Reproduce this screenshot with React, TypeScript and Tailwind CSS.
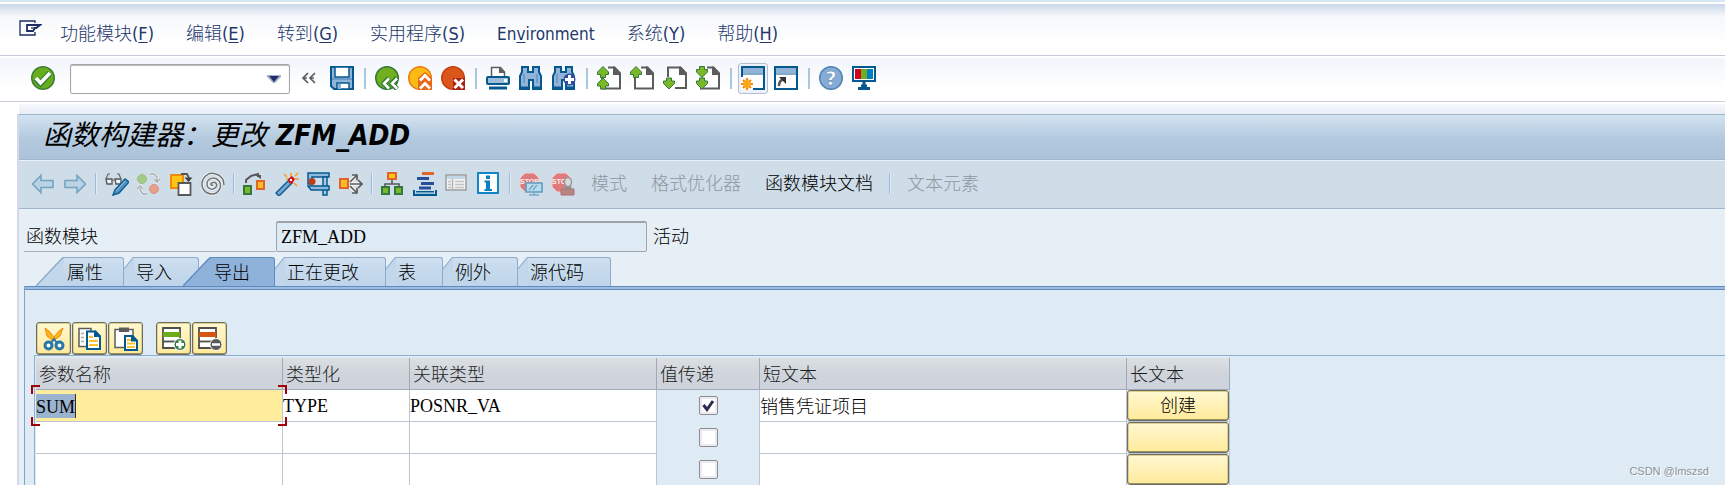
import type { ReactNode } from "react";

const MENU = [
  { label: "功能模块", hotkey: "F" },
  { label: "编辑", hotkey: "E" },
  { label: "转到", hotkey: "G" },
  { label: "实用程序", hotkey: "S" },
  { label: "Environment", hotkey: "" },
  { label: "系统", hotkey: "Y" },
  { label: "帮助", hotkey: "H" },
];

const TABS = ["属性", "导入", "导出", "正在更改", "表", "例外", "源代码"];

const COLUMNS = [
  { title: "参数名称", width: "w-[247px]" },
  { title: "类型化", width: "w-[127px]" },
  { title: "关联类型", width: "w-[247px]" },
  { title: "值传递", width: "w-[103px]" },
  { title: "短文本", width: "w-[367px]" },
  { title: "长文本", width: "w-[103px]" },
];

const ROWS = [
  { name: "SUM", typing: "TYPE", ref: "POSNR_VA", byValue: true, text: "销售凭证项目", action: "创建" },
  { name: "", typing: "", ref: "", byValue: false, text: "", action: "" },
  { name: "", typing: "", ref: "", byValue: false, text: "", action: "" },
];

const CJK = "font-['Liberation_Sans','Noto_Sans_CJK_SC',sans-serif] font-light";
const DATA = "font-['Liberation_Serif','Noto_Sans_CJK_SC',serif]";
const YELLOW =
  "rounded-[3px] border border-[#6c6b66] bg-linear-to-b from-[#fff8d2] to-[#ffea99] shadow-[inset_0_-1px_0_#9a9160,inset_0_0_0_1px_#ddd08a]";

function Icon({ children, className = "" }: { children: ReactNode; className?: string }) {
  return (
    <svg viewBox="0 0 24 24" className={`block size-6 flex-none ${className}`} fill="none" aria-hidden="true">
      {children}
    </svg>
  );
}

function Tool({ label, children, disabled }: { label: string; children: ReactNode; disabled?: boolean }) {
  return (
    <button type="button" aria-label={label} disabled={disabled} className="flex-none">
      <Icon>{children}</Icon>
    </button>
  );
}

function Sep() {
  return <span className="h-[21px] w-[3px] flex-none border-r-2 border-[#a9c8e0]" />;
}

function ThinSep() {
  return <span className="h-[21px] w-0.5 flex-none border-r border-[#e1ebf7] bg-[#9dbbe0]" />;
}

/* ---- standard toolbar drawings ---- */

const UP = "M6 0.500l5.500 5.500v2.500H8.500v3h-5v-3H0.500V6z";
const DOWN = "M6 11.500l5.500-5.500V3.500H8.500v-3h-5v3H0.500V6z";

function PageIcon({ top, bottom }: { top?: string; bottom?: string }) {
  return (
    <>
      <path d="M9 1h9l5.500 6v15.500H5.500V15" fill="#fff" />
      <path d={bottom && !top ? "M5 11V1.500h12l6 6v14.500H12" : "M11 1.500h6l6 6V22.500H5V12"} stroke="#5c5c5c" strokeWidth="2" />
      <path d="M16 0.500h2L24 7v2h-8z" fill="#5c5c5c" />
      {top && <path d={top} fill="#7ab827" stroke="#33793d" />}
      {bottom && (
        <g transform="translate(0 11.500)">
          <path d={bottom} fill="#7ab827" stroke="#33793d" />
        </g>
      )}
    </>
  );
}

function Binoculars() {
  return (
    <>
      <path d="M3 1h6v5h5V1h6v5l2 4v13h-8V14h-4v9H1V10l2-4z" fill="#93b4d8" stroke="#04598f" strokeWidth="2" />
      <path d="M5 8v9M18 8v9" stroke="#6d9ec9" strokeWidth="2" />
      <path d="M1 22h8M14 22h8" stroke="#04598f" strokeWidth="3" />
    </>
  );
}

function StopSign() {
  return (
    <>
      <path d="M6 1h9l5 5v9l-5 5H6l-5-5V6z" fill="#df7b7d" stroke="#f0d0d2" />
      <text x="10.500" y="12" textAnchor="middle" className="fill-[#fbeeee] font-['Liberation_Sans',sans-serif] text-[7px] font-bold">
        STOP
      </text>
    </>
  );
}

function MenuBar() {
  return (
    <nav className="flex h-[52px] items-center border-b border-[#c6cad6] bg-linear-to-b from-[#cad7e7] via-[#f6f8fb] via-25% to-white to-75% pt-[9px] pl-[19px]">
      <button type="button" aria-label="菜单" className="mb-3 w-[41px]">
        <svg width="23" height="17" viewBox="0 0 23 17" fill="none" aria-hidden="true">
          <path d="M16 3V1H1v14h15v-3" stroke="#1c2f63" strokeWidth="1.300" />
          <path d="M8 5h13l-4 3h-1l-2 3H8z" fill="#fff" stroke="#1c2f63" strokeWidth="1.800" />
          <path d="M12 8h6" stroke="#1c2f63" strokeWidth="1.300" />
        </svg>
      </button>
      <div className="flex items-center gap-8 text-[#24376c]">
        {MENU.map((m) => (
          <button
            key={m.label}
            type="button"
            className="font-['DejaVu_Sans_Condensed','DejaVu_Sans','Noto_Sans_CJK_SC',sans-serif] text-lg leading-6 whitespace-nowrap"
          >
            {m.hotkey ? (
              <>
                <span className={CJK}>{m.label}</span>(<u className="underline-offset-2">{m.hotkey}</u>)
              </>
            ) : (
              <span className="text-[17px]">
                En<u className="underline-offset-2">v</u>ironment
              </span>
            )}
          </button>
        ))}
      </div>
    </nav>
  );
}

function StandardToolbar() {
  return (
    <div className="mt-0.5 flex h-11 items-center border-b border-[#cbd0dc] bg-linear-to-b from-[#f2f5fb] to-white to-70% pr-4 pb-[3px] pl-[31px]">
      <Tool label="确认">
        <circle cx="12" cy="12" r="11.250" fill="#68ad1e" stroke="#3f7f37" strokeWidth="1.500" />
        <path d="M4.500 12.500l5 5L19 7" stroke="#3f7f37" strokeWidth="6" />
        <path d="M5 12l4.500 5L19 7" stroke="#fff" strokeWidth="3.500" />
      </Tool>
      <div className="mt-0.5 ml-[15px] flex h-[30px] w-[220px] flex-none items-center rounded-xs border border-[#a2a4a8] bg-white shadow-[inset_0_1px_1px_#b9bbbf]">
        <input aria-label="命令" className="h-full min-w-0 flex-1 bg-transparent px-2 outline-none" />
        <button type="button" aria-label="命令历史" className="mr-2">
          <svg width="14" height="8" viewBox="0 0 14 8" aria-hidden="true">
            <path d="M0 0h14v2l-6 6H6L0 2z" fill="#a8afcb" />
            <path d="M2 1h10L7 7z" fill="#1f2f6b" />
          </svg>
        </button>
      </div>
      <button type="button" aria-label="隐藏命令字段" className="mr-3 ml-[11px]">
        <svg width="17" height="12" viewBox="0 0 17 12" fill="none" aria-hidden="true">
          <path d="M7 1L2 6l5 5M14 1L9 6l5 5M3 6h3M10 6h3" stroke="#5d5d5d" strokeWidth="1.700" />
        </svg>
      </button>
      <div className="flex items-center gap-[9px]">
        <Tool label="保存">
          <path d="M1 1h22v22H4l-3-3z" fill="#92b3d8" stroke="#04598f" strokeWidth="2" />
          <path d="M5 1v10h14V1z" fill="#fff" stroke="#04598f" strokeWidth="1.500" />
          <path d="M2 13h20" stroke="#6d9ac6" strokeWidth="2" />
          <path d="M7 23v-6h12v6z" fill="#fff" stroke="#04598f" strokeWidth="1.500" />
          <path d="M8 18h3v5H8z" fill="#92b3d8" />
        </Tool>
        <Sep />
        <Tool label="返回">
          <circle cx="12" cy="12" r="11.250" fill="#70b01e" stroke="#35773d" strokeWidth="1.500" />
          <path d="M14 12l-5 5.500 5 5.500M22 12l-5 5.500 5 5.500" stroke="#35773d" strokeWidth="5" />
          <path d="M14 12.500l-5 5 5 5M22 12.500l-5 5 5 5" stroke="#fff" strokeWidth="2.500" />
        </Tool>
        <Tool label="退出">
          <circle cx="12" cy="12" r="11.250" fill="#fcbb12" stroke="#ec7d19" strokeWidth="1.500" />
          <path d="M10 12l7-6 7 6v12H10z" fill="#e8681b" />
          <path d="M12 14.500l5-5 5 5M12 22.500l5-5 5 5" stroke="#fff" strokeWidth="2.800" />
        </Tool>
        <Tool label="取消">
          <circle cx="12" cy="12" r="11.250" fill="#da5719" stroke="#c63f19" strokeWidth="1.500" />
          <path d="M12 12h12v12H12z" fill="#a92314" />
          <path d="M13.500 13.500l8.500 8.500M22 13.500L13.500 22" stroke="#fff" strokeWidth="3" />
        </Tool>
        <Sep />
        <Tool label="打印">
          <path d="M5.500 10V1.500h9L18.500 6v4" fill="#fff" stroke="#5c5c5c" strokeWidth="1.500" />
          <path d="M13 1l6 6h-6z" fill="#5c5c5c" />
          <rect x="1" y="11" width="22" height="7" rx="1" fill="#9fbcdd" stroke="#04598f" strokeWidth="2" />
          <path d="M18 13h3v3h-3z" fill="#fff" />
          <path d="M3 22h18" stroke="#04598f" strokeWidth="3" />
        </Tool>
        <Tool label="查找">
          <Binoculars />
        </Tool>
        <Tool label="查找下一个">
          <Binoculars />
          <circle cx="17.500" cy="13.500" r="6" fill="#2e4d9c" />
          <path d="M17.500 9v9M13 13.500h9" stroke="#fff" strokeWidth="3" />
        </Tool>
        <Sep />
        <Tool label="第一页">
          <PageIcon top={UP} bottom={UP} />
        </Tool>
        <Tool label="上一页">
          <PageIcon top={UP} />
        </Tool>
        <Tool label="下一页">
          <PageIcon bottom={DOWN} />
        </Tool>
        <Tool label="最后一页">
          <PageIcon top={DOWN} bottom={DOWN} />
        </Tool>
        <Sep />
        <button
          type="button"
          aria-label="新建会话"
          className="-mx-[3px] flex h-[31px] w-[30px] flex-none items-center justify-center rounded-[3px] border border-[#b4bdd2] bg-[#eef1f9]"
        >
          <Icon>
            <path d="M1 1h22v22H1z" fill="#fff" stroke="#04598f" strokeWidth="2" />
            <path d="M2 2h20v5H2z" fill="#92b3d8" />
            <path d="M1 8h22" stroke="#04598f" />
            <path d="M0 11h12v13H0z" fill="#fff" />
            <path d="M6 12v12M0 18h12M2 14l8 8M10 14l-8 8" stroke="#f08a0c" strokeWidth="2.200" />
            <circle cx="6" cy="18" r="4" fill="#fba81c" />
          </Icon>
        </button>
        <Tool label="创建快捷方式">
          <path d="M1 1h22v22H1z" fill="#fff" stroke="#04598f" strokeWidth="2" />
          <path d="M2 2h20v5H2z" fill="#92b3d8" />
          <path d="M1 8h22" stroke="#04598f" />
          <path d="M5 20c0-4 1-6 5-7" stroke="#555" strokeWidth="2.500" />
          <path d="M5 11h7v7z" fill="#333" />
        </Tool>
        <Sep />
        <Tool label="帮助">
          <circle cx="12" cy="12" r="11.250" fill="#86acd5" stroke="#4f83b4" strokeWidth="1.500" />
          <text x="12" y="19" textAnchor="middle" className="fill-white stroke-[#4f83b4] stroke-[0.500px] font-['DejaVu_Sans',sans-serif] text-[19px] font-bold">
            ?
          </text>
        </Tool>
        <Tool label="定制本地布局">
          <path d="M1 1h22v14H1z" fill="#fff" stroke="#04598f" strokeWidth="2" />
          <path d="M3 3h6v10H3z" fill="#d0011b" />
          <path d="M9 3h6v10H9z" fill="#6fae1e" />
          <path d="M15 3h6v10h-6z" fill="#007fc5" />
          <path d="M12 15v8M6 22.500h12M9 20h6" stroke="#04598f" strokeWidth="3" />
        </Tool>
      </div>
    </div>
  );
}

function TitleBar() {
  return (
    <h1 className="flex h-[45px] items-center border-t border-[#9fb2c9] bg-linear-to-b from-[#d3e3f0] via-[#b3c9de] via-55% to-[#abc2db] pb-0.5 pl-6 font-['DejaVu_Sans_Condensed','DejaVu_Sans','Noto_Sans_CJK_SC',sans-serif] text-[28px] leading-9 font-bold whitespace-pre text-black italic">
      <span className="font-normal">函数构建器：更改</span> ZFM_ADD
    </h1>
  );
}

function AppToolbar() {
  return (
    <div className="flex h-[50px] items-center gap-2 border-y border-t-[#a3b6cb] border-b-[#a3b5ca] bg-[#cfdde8] pr-4 pb-px pl-3 text-lg shadow-[inset_0_1px_0_#e9f0f7]">
      <Tool label="上一对象">
        <path d="M1.500 12L10 3.500V8.500h12v7H10v5z" fill="#b9d2e4" stroke="#74a4c2" strokeWidth="1.600" />
      </Tool>
      <Tool label="下一对象">
        <path d="M22.500 12L14 3.500V8.500H2v7h12v5z" fill="#b9d2e4" stroke="#74a4c2" strokeWidth="1.600" />
      </Tool>
      <ThinSep />
      <Tool label="显示/更改">
        <path d="M1 7h6v5H2zM10 7h6v5h-5z" fill="#f1f4f6" stroke="#555" strokeWidth="1.300" />
        <path d="M1 7l2-5h2M16 7l-2-5h-2M7 8h3" stroke="#666" strokeWidth="1.200" />
        <path d="M8 23l2-5L20 7l4 3-10 11z" fill="#5592c2" stroke="#135f94" strokeWidth="1.500" />
        <path d="M11 19l9-10" stroke="#9bc2e0" />
      </Tool>
      <Tool label="激活/取消激活" disabled>
        <circle cx="5" cy="7" r="4.500" fill="#a5ca83" stroke="#9abe86" />
        <circle cx="17" cy="17" r="4.500" fill="#e5a08b" stroke="#dc907f" />
        <path d="M13 2h4l3 3v4M17 7l3 3 3-3M10 22H6l-3-4v-2M0 17l3-3 3 3" stroke="#eef0f1" strokeWidth="3" />
        <path d="M13 2h4l3 3v4M17 7l3 3 3-3M10 22H6l-3-4v-2M0 17l3-3 3 3" stroke="#a7a9ab" strokeWidth="1.300" />
      </Tool>
      <Tool label="其它对象">
        <path d="M2 3h12v13H2z" fill="#fdc316" stroke="#f18a06" strokeWidth="2" />
        <path d="M9.500 11h12v12h-12z" fill="#fff" stroke="#595959" strokeWidth="1.800" />
        <path d="M12 2h6l2 4v3" stroke="#555" strokeWidth="1.800" />
        <path d="M15.500 5.500h8L19.500 10z" fill="#444" />
      </Tool>
      <Tool label="增强">
        <path
          d="M12 13c-2 1-3-1-1-2 3-2 6 1 4 4-3 4-9 2-9-3 0-6 8-8 12-3 4 6-1 13-7 13-8 0-12-8-9-14M1 10C3 3 9 0 15 2c6 2 8 6 8 11"
          stroke="#f4f6f7"
          strokeWidth="3"
        />
        <path
          d="M12 13c-2 1-3-1-1-2 3-2 6 1 4 4-3 4-9 2-9-3 0-6 8-8 12-3 4 6-1 13-7 13-8 0-12-8-9-14M1 10C3 3 9 0 15 2c6 2 8 6 8 11"
          stroke="#707274"
          strokeWidth="1.500"
        />
      </Tool>
      <ThinSep />
      <Tool label="测试">
        <path d="M3 11V8l5-4 7-2v3" stroke="#595959" strokeWidth="2" />
        <path d="M12 3h6v4z" fill="#555" />
        <path d="M1 14h7v8H1z" fill="#7ab929" stroke="#33793d" strokeWidth="2" />
        <path d="M14 9h7v8h-7z" fill="#fdbc24" stroke="#e1652b" strokeWidth="2" />
      </Tool>
      <Tool label="模式">
        <path d="M1 21L14 8l3 3L4 24z" fill="#73a8d0" stroke="#155f92" strokeWidth="1.500" />
        <path d="M16 1v5M9 2l3 3M23 1l-3 3M20 7h4M19 11l3 3M11 7h2" stroke="#f5a019" strokeWidth="1.600" />
        <path d="M13 7l4-3 3 3-3 5-3-1z" fill="#d0141c" />
        <path d="M15 7h2v2h-2z" fill="#fff" />
      </Tool>
      <Tool label="检查">
        <path d="M1 1h21v4H5v7H1z" fill="#8db9da" stroke="#04598f" strokeWidth="1.500" />
        <path d="M16 5h4v18h-4z" fill="#a9cde6" stroke="#04598f" strokeWidth="1.500" />
        <path d="M1 14h21v4H4z" fill="#8db9da" stroke="#04598f" strokeWidth="1.500" />
        <circle cx="5" cy="9.500" r="3.500" fill="#bc3d1c" />
      </Tool>
      <Tool label="使用处清单">
        <path d="M11 12h12M11 10l6-6M11 14l6 6" stroke="#f3f5f6" strokeWidth="4" />
        <path d="M11 12h11M11 10l6-6M11 14l6 6M19 8l4 4-4 4M13 3h5v5M13 21h5v-5" stroke="#595959" strokeWidth="1.700" />
        <path d="M1 7h8v9H1z" fill="#fdbc24" stroke="#e1652b" strokeWidth="2" />
      </Tool>
      <ThinSep />
      <Tool label="层次">
        <path d="M11 8v4M4 15v-3h14v3" stroke="#595959" strokeWidth="1.600" />
        <path d="M7 1h8v6H7z" fill="#fdc316" stroke="#e1652b" strokeWidth="2" />
        <path d="M1 15h7v7H1zM14 15h7v7h-7z" fill="#7ab929" stroke="#33793d" strokeWidth="2" />
      </Tool>
      <Tool label="优化">
        <path d="M9 1.500h12" stroke="#e0662d" strokeWidth="3" />
        <path d="M4 6.500h12M8 11.500h13M6 16h12" stroke="#274f9b" strokeWidth="3" />
        <path d="M1 18v5h22v-5M3 20h18" stroke="#04598f" strokeWidth="2" />
        <path d="M3 21h18" stroke="#8fb9d9" strokeWidth="1.500" />
      </Tool>
      <Tool label="列表" disabled>
        <path d="M1 3h20v15H1z" fill="#f2f2f2" stroke="#9a9da0" strokeWidth="1.500" />
        <path d="M2 4h18v3H2z" fill="#c4d5e8" />
        <path d="M7.500 7v11" stroke="#b2b2b2" strokeWidth="1.500" />
        <path d="M3 9.500h3M3 12.500h3M3 15.500h3M10 9.500h9M10 12.500h9M10 15.500h9" stroke="#c3c3c3" strokeWidth="1.500" />
      </Tool>
      <Tool label="信息">
        <path d="M1 1h20v20H1z" fill="#fff" stroke="#0f86c6" strokeWidth="2" />
        <path d="M9 3.500h4v3.500H9zM7.500 8.500h5.500v8.500h2v2H7.500v-2H9v-6.500H7.500z" fill="#0a80c2" />
      </Tool>
      <ThinSep />
      <Tool label="会话断点" disabled>
        <StopSign />
        <path d="M7 11h16v9H7z" fill="#b7dcef" stroke="#619cbd" strokeWidth="1.600" />
        <path d="M15 20v3M10 23h10M10 18l4-5M14 18l4-5" stroke="#78a9c4" strokeWidth="1.400" />
      </Tool>
      <Tool label="外部断点" disabled>
        <StopSign />
        <path d="M10 17h13v6H10z" fill="#ba8480" stroke="#a8736f" />
        <path d="M13 17l1-3h6l1 3z" fill="#8f8f8f" />
        <ellipse cx="17" cy="10" rx="3.500" ry="4.500" fill="#d9d9d9" stroke="#999" strokeWidth="1.500" />
      </Tool>
      <div className={`${CJK} flex items-center whitespace-nowrap`}>
        <button type="button" disabled className="ml-2 text-[#8d989f]">模式</button>
        <button type="button" disabled className="ml-6 text-[#8d989f]">格式优化器</button>
        <button type="button" className="mr-2 ml-6 text-black">函数模块文档</button>
      </div>
      <ThinSep />
      <button type="button" disabled className={`${CJK} ml-2 whitespace-nowrap text-[#8d989f]`}>文本元素</button>
    </div>
  );
}

function Tab({ label, first, active }: { label: string; first?: boolean; active?: boolean }) {
  const wide = first || active;
  const fill = active ? "#8fb2da" : "#c3d7eb";
  const line = active ? "#5f8cc0" : "#8fabcb";
  return (
    <button type="button" role="tab" aria-selected={!!active} className={active ? "z-10 -ml-4 flex" : "flex"}>
      {wide ? (
        <svg width="28" height="29" viewBox="0 0 28 29" aria-hidden="true">
          <path d="M0 29L28 0v29z" fill={fill} />
          <path d="M0 29L25 2.500Q27 0.500 28 0.500" fill="none" stroke={line} strokeWidth="1.500" />
        </svg>
      ) : (
        <svg width="10" height="29" viewBox="0 0 10 29" aria-hidden="true">
          <path d="M0 12L10 0v29H0z" fill={fill} />
          <path d="M0 12L8 2Q9 0.500 10 0.500" fill="none" stroke={line} strokeWidth="1.200" />
        </svg>
      )}
      <span
        className={`${CJK} h-[29px] rounded-tr-[3px] border-t border-r text-lg leading-[31px] text-black ${
          active
            ? "border-[#5f8cc0] bg-[#8fb2da] pr-6 pl-[3px]"
            : "border-[#8fabcb] bg-linear-to-b from-[#cddff0] to-[#bfd4e9] " + (first ? "pr-5 pl-[3px]" : "pr-[26px] pl-0.5")
        }`}
      >
        {label}
      </span>
    </button>
  );
}

function EditButton({ label, children }: { label: string; children: ReactNode }) {
  return (
    <button type="button" aria-label={label} className={`${YELLOW} flex h-[33px] w-[35px] items-center justify-center`}>
      <Icon>{children}</Icon>
    </button>
  );
}

function EditButtons() {
  return (
    <div className="flex h-[65px] items-end gap-px pl-[11px]">
      <EditButton label="剪切">
        <path d="M3 1l2 8 6 5 7-5 3-8-4 3-5 6-5-6z" fill="#fcb519" stroke="#ef8d12" />
        <circle cx="6.500" cy="18.500" r="3.500" fill="#fff" stroke="#2877a8" strokeWidth="3" />
        <circle cx="17.500" cy="18.500" r="3.500" fill="#fff" stroke="#2877a8" strokeWidth="3" />
        <path d="M9 16l3-4 3 4" stroke="#2877a8" strokeWidth="2" />
      </EditButton>
      <EditButton label="复制">
        <path d="M1 1.500h12v18H1z" fill="#fff" stroke="#5c5c5c" strokeWidth="1.500" />
        <path d="M3 6.500h3M3 10.500h3M3 14.500h3" stroke="#aaa" strokeWidth="1.500" />
        <path d="M9 4.500h8l5 5V22H9z" fill="#fff" stroke="#04598f" strokeWidth="2" />
        <path d="M16 3.500h2l5 5.500v1h-7z" fill="#04598f" />
        <path d="M11 10h4M11 14h9M11 18h9" stroke="#f9c42d" strokeWidth="2" />
      </EditButton>
      <EditButton label="粘贴">
        <path d="M1 2.500h18v18H1z" fill="#fff" stroke="#5c5c5c" strokeWidth="1.500" />
        <path d="M5 0.500h10V5H5z" fill="#5c5c5c" />
        <path d="M11 9h7l5 5v9H11z" fill="#fff" stroke="#04598f" strokeWidth="2" />
        <path d="M17 8h2l5 5.500v1h-7z" fill="#04598f" />
        <path d="M13 13h4M13 16.500h8M13 20h8" stroke="#f9c42d" strokeWidth="2" />
      </EditButton>
      <span className="w-[11px]" />
      <EditButton label="插入行">
        <path d="M1 1h17v20H1z" fill="#fff" stroke="#4f4f4f" strokeWidth="1.800" />
        <path d="M1 5h17v5H1z" fill="#6cac1a" />
        <path d="M1 14.500h17" stroke="#4f4f4f" strokeWidth="1.800" />
        <circle cx="18" cy="17.500" r="6" fill="#367b45" stroke="#fff" />
        <path d="M18 13.500v8M14 17.500h8" stroke="#fff" strokeWidth="3" />
      </EditButton>
      <EditButton label="删除行">
        <path d="M1 1h17v20H1z" fill="#fff" stroke="#4f4f4f" strokeWidth="1.800" />
        <path d="M1 5h17v5H1z" fill="#d75413" />
        <path d="M1 14.500h17" stroke="#4f4f4f" strokeWidth="1.800" />
        <circle cx="18" cy="17.500" r="6" fill="#5a5a5a" stroke="#fff" />
        <path d="M14 17.500h8" stroke="#fff" strokeWidth="2.500" />
      </EditButton>
    </div>
  );
}

function FocusFrame() {
  return (
    <span className="pointer-events-none absolute -inset-x-[5px] -inset-y-[5px] z-10">
      <i className="absolute top-0 left-0 size-[9px] border-t-2 border-l-2 border-[#a00008]" />
      <i className="absolute top-0 right-0 size-[9px] border-t-2 border-r-2 border-[#a00008]" />
      <i className="absolute bottom-0 left-0 size-[9px] border-b-2 border-l-2 border-[#a00008]" />
      <i className="absolute right-0 bottom-0 size-[9px] border-r-2 border-b-2 border-[#a00008]" />
    </span>
  );
}

function ParameterTable() {
  const cell = "border-r border-b border-[#bcc5d3] p-0";
  const field = `${DATA} block h-full w-full bg-transparent pt-0.5 text-lg text-black outline-none`;
  return (
    <div className="ml-[9px] border-t border-l border-[#8fafd2] pt-0.5 pl-px">
      <table className="w-[1194px] table-fixed border-separate border-spacing-0">
        <thead>
          <tr className="h-8">
            {COLUMNS.map((c) => (
              <th
                key={c.title}
                scope="col"
                className={`${c.width} ${CJK} border-r border-b border-[#9fa9b8] bg-linear-to-b from-[#dce0e4] via-[#d0d5dc] to-[#ced3dc] p-0 pt-0.5 pl-[3px] text-left text-lg leading-6 text-[#1c1c1c]`}
              >
                {c.title}
              </th>
            ))}
          </tr>
        </thead>
        <tbody>
          {ROWS.map((r, i) => (
            <tr key={i} className="h-8 bg-white">
              <td className={`${cell} relative h-8 ${i === 0 ? "bg-[#ffec9c]" : ""}`}>
                {i === 0 ? (
                  <>
                    <input
                      aria-label="参数名称"
                      defaultValue={r.name}
                      className={`${DATA} block h-6 field-sizing-content border-r border-[#3a3020] bg-[#9ab3cf] pt-0.5 text-lg text-black outline-none`}
                    />
                    <FocusFrame />
                  </>
                ) : (
                  <input aria-label="参数名称" defaultValue={r.name} className={field} />
                )}
              </td>
              <td className={cell}>
                <input aria-label="类型化" defaultValue={r.typing} className={field} />
              </td>
              <td className={cell}>
                <input aria-label="关联类型" defaultValue={r.ref} className={field} />
              </td>
              <td className="border-r border-[#bcc5d3] bg-[#deebf4] p-0 pb-0.5">
                <label className="relative mx-auto block size-[19px]">
                  <input
                    type="checkbox"
                    aria-label="值传递"
                    defaultChecked={r.byValue}
                    className="peer block size-[19px] appearance-none rounded-xs border border-[#8c8c92] bg-white shadow-[inset_0_0_0_2px_#ecebf0]"
                  />
                  <svg viewBox="0 0 19 19" className="absolute inset-0 hidden peer-checked:block" fill="none" aria-hidden="true">
                    <path d="M4.500 9l3.500 4.500L14 5" stroke="#2c2c50" strokeWidth="3" />
                  </svg>
                </label>
              </td>
              <td className={cell}>
                <input
                  aria-label="短文本"
                  defaultValue={r.text}
                  className={`${CJK} block h-full w-full bg-transparent pb-0.5 text-lg text-black outline-none`}
                />
              </td>
              <td className="border-r border-b border-[#bcc5d3] p-0">
                <button
                  type="button"
                  aria-label={r.action || "长文本"}
                  className={`${YELLOW} ${CJK} block h-[31px] w-full text-lg leading-6 text-black`}
                >
                  {r.action}
                </button>
              </td>
            </tr>
          ))}
        </tbody>
      </table>
    </div>
  );
}

export default function App() {
  return (
    <div className="relative flex h-screen flex-col overflow-hidden bg-white">
      <div className="h-1 flex-none border-b-2 border-white bg-[#dae6f3]" />
      <div className="flex-none">
        <MenuBar />
        <StandardToolbar />
        <div className="mt-0.5 ml-[19px] h-2.5 bg-linear-to-b from-[#f6f8fc] to-[#e8eef8]" />
      </div>
      <main className="ml-[17px] min-h-0 flex-1 border-l-2 border-[#d3d9e7] bg-[#e7eff6]">
        <TitleBar />
        <AppToolbar />
        <div className={`${CJK} mt-3 ml-[5px] flex h-[31px] items-center text-lg text-black`}>
          <label htmlFor="function-module" className="h-full w-[252px] border-b border-[#abb0b6] pl-0.5 leading-8">
            函数模块
          </label>
          <input
            id="function-module"
            readOnly
            value="ZFM_ADD"
            className={`${DATA} h-full w-[371px] rounded-xs border border-[#a0a4a8] bg-[#dfebf4] pt-0.5 pl-1 text-lg font-normal shadow-[inset_0_1px_0_#a0a4a8] outline-none`}
          />
          <span className="ml-1.5 leading-8">活动</span>
        </div>
        <div role="tablist" className="mt-[5px] flex pl-[17px]">
          {TABS.map((t, i) => (
            <Tab key={t} label={t} first={i === 0} active={t === "导出"} />
          ))}
        </div>
        <div className="ml-[5px] h-full border-l border-[#7fa3cd] bg-[#deebf4]">
          <div className="h-1 border-y border-[#5f8cc0] bg-[#9dbce0]" />
          <EditButtons />
          <ParameterTable />
        </div>
      </main>
      <span className="absolute right-4 bottom-2 font-['Liberation_Sans',sans-serif] text-[11px] leading-3 text-[#8b9197] [text-shadow:1px_1px_0_#fff]">
        CSDN @lmszsd
      </span>
    </div>
  );
}
